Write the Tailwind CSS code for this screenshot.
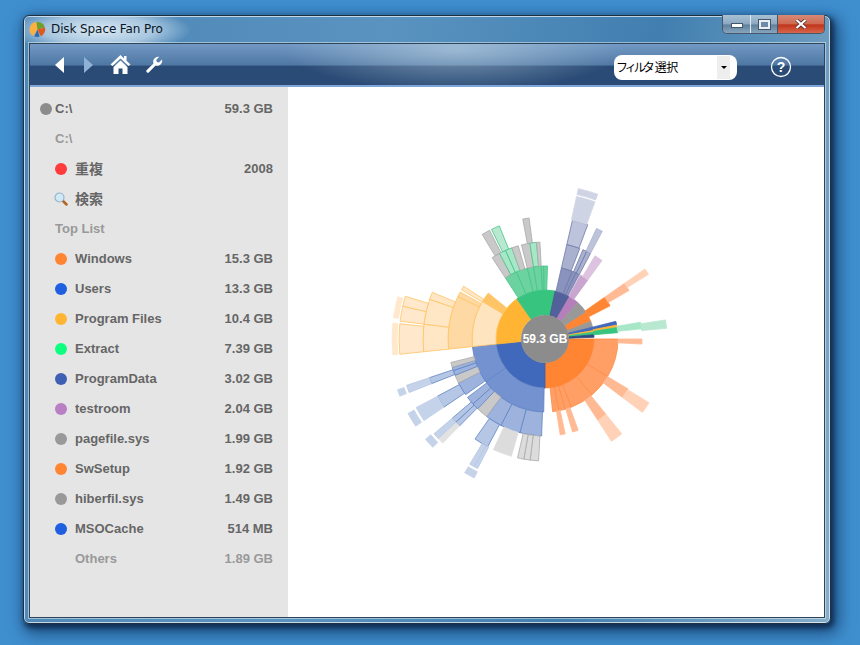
<!DOCTYPE html>
<html lang="en">
<head>
  <meta charset="UTF-8" />
  <title>Disk Space Fan Pro</title>
  <script src="https://cdn.jsdelivr.net/npm/@tailwindcss/browser@4"></script>
</head>
<body class="w-[860px] h-[645px] overflow-hidden bg-[#3f8fcf] pl-[23px] pt-[15px] font-['DejaVu_Sans','Noto_Sans_CJK_JP',sans-serif]">
  <!-- Window -->
  <div class="w-[808px] h-[609px] flex flex-col rounded-[6px] border border-[#1d3044] px-[5px] pb-[5px] shadow-[2px_3px_5px_1px_rgba(10,30,60,0.7),4px_6px_16px_4px_rgba(10,40,80,0.6),inset_0_0_0_1px_rgba(255,255,255,0.65)] bg-[linear-gradient(100deg,#4c86b6_0%,#5a93c0_40%,#417fb0_70%,#85aecb_100%)]">
    <!-- Title bar -->
    <div class="h-[27px] shrink-0 flex items-start justify-between -mx-[5px] pl-[5px] pr-[5px] rounded-t-[6px] bg-[radial-gradient(ellipse_92px_24px_at_75px_14px,rgba(225,238,248,0.95),rgba(225,238,248,0.6)_60%,rgba(225,238,248,0)_100%)]">
      <div class="flex items-center gap-[5px] h-[25px] pt-[1px]">
        <svg class="w-[17px] h-[17px]" viewBox="0 0 16 16">
          <path d="M8 8 L8 1 A7 7 0 0 0 4 14 Z" fill="#fbb040" />
          <path d="M8 8 L7 1 A7 7 0 0 1 15 6 Z" fill="#6f9e2e" />
          <path d="M8 8 L15 6 A7 7 0 0 1 11 14.300 Z" fill="#e2571e" />
          <path d="M8 8 L10 14.700 A7 7 0 0 1 5 14.300 Z" fill="#2b6cb0" />
        </svg>
        <span class="text-[12px] leading-none tracking-[-0.1px] text-[#0c1626]">Disk Space Fan Pro</span>
      </div>
      <!-- Caption buttons -->
      <div class="flex h-[19px] -mt-px rounded-b-[5px] border border-t-0 border-[#46586a] overflow-hidden">
        <div class="w-[28px] flex items-end justify-center pb-[5px] border-r border-[#dfe8ef] bg-[linear-gradient(180deg,#a9c0d3_0%,#8ca9c2_50%,#5f7f9b_55%,#87a5bd_100%)]">
          <div class="w-[12px] h-[5px] bg-white border border-[#44566a]"></div>
        </div>
        <div class="w-[27px] flex items-center justify-center border-r border-[#44566a] bg-[linear-gradient(180deg,#a9c0d3_0%,#8ca9c2_50%,#5f7f9b_55%,#87a5bd_100%)]">
          <div class="w-[11px] h-[9px] border-2 border-[#e8eef3] outline outline-[#44566a] bg-[#6c8ba6]"></div>
        </div>
        <div class="w-[46px] flex items-center justify-center bg-[linear-gradient(180deg,#d58a78_0%,#cf6a52_48%,#c0351c_55%,#d8654a_100%)]">
          <svg class="w-[12px] h-[10px]" viewBox="0 0 12 10">
            <path d="M1.500 1 L10.500 9 M10.500 1 L1.500 9" stroke="#4a2a28" stroke-width="3.600" />
            <path d="M1.500 1 L10.500 9 M10.500 1 L1.500 9" stroke="#fff" stroke-width="2.200" />
          </svg>
        </div>
      </div>
    </div>

    <!-- Client area -->
    <div class="flex-1 flex flex-col min-h-0 border border-[#2d4459] shadow-[0_0_0_1px_rgba(255,255,255,0.45)]">
      <!-- Toolbar -->
      <div class="h-[43px] shrink-0 flex items-center border-b-2 border-[#7fa5d8] bg-[radial-gradient(ellipse_170px_42px_at_425px_5px,rgba(190,212,226,0.6),rgba(190,212,226,0)_100%),linear-gradient(180deg,#7199c4_0%,#4f77a3_52%,#2a4b76_53%,#2a4b76_100%)] pl-[24px] pr-[33px]">
        <svg class="w-[11px] h-[16px]" viewBox="0 0 11 16"><path d="M10 0 V16 L1 8 Z" fill="#fff" /></svg>
        <svg class="w-[11px] h-[16px] ml-[18px]" viewBox="0 0 11 16"><path d="M1 0 V16 L10 8 Z" fill="#8fb1d6" /></svg>
        <svg class="w-[21px] h-[21px] ml-[16px]" viewBox="0 0 21 21">
          <path d="M10.500 1 L0.500 10.500 L2.500 12 L10.500 4.500 L18.500 12 L20.500 10.500 L16.500 6.800 V2 H14 V4.500 Z" fill="#fff" />
          <path d="M10.500 6.500 L3.500 13 V20 H8.500 V14.500 H12.500 V20 H17.500 V13 Z" fill="#fff" />
        </svg>
        <svg class="w-[17px] h-[17px] ml-[15px]" viewBox="0 0 17 17">
          <path d="M16 3.500 L13 6.500 L10.800 6 L10.300 3.800 L13.300 0.800 A5 5 0 0 0 7.500 7.400 L0.800 14 A1.500 1.500 0 0 0 3 16.200 L9.600 9.500 A5 5 0 0 0 16 3.500 Z" fill="#fff" />
        </svg>
        <div class="ml-auto mt-[5px] w-[123px] h-[25px] flex items-center rounded-[8px] bg-white pl-[2px]">
          <span class="text-[12px] leading-none text-black font-['Noto_Sans_CJK_JP',sans-serif]"><span class="tracking-[-3px]">フィルタ</span><span class="ml-[3px] tracking-[-0.5px]">選択</span></span>
          <div class="ml-auto mr-[7px] w-[13px] h-[23px] flex items-center justify-center bg-[#eeeeee]">
            <div class="w-0 h-0 border-x-[3px] border-t-[3px] border-x-transparent border-t-black"></div>
          </div>
        </div>
        <svg class="w-[22px] h-[22px] ml-[33px] mt-[4px] mr-[-1px]" viewBox="0 0 22 22">
          <circle cx="11" cy="11" r="9.500" fill="none" stroke="#fff" stroke-width="1.300" />
          <text x="11" y="16" text-anchor="middle" font-size="14" font-weight="700" fill="#fff" font-family="Liberation Sans">?</text>
        </svg>
      </div>

      <div class="flex-1 flex min-h-0">
        <!-- Sidebar -->
        <aside class="w-[258px] shrink-0 bg-[#e5e5e5] pt-[7px] text-[13px] font-bold text-[#666666] font-['Liberation_Sans','Noto_Sans_CJK_JP',sans-serif]">
          <div class="h-[30px] flex items-center pl-[10px] pr-[15px]">
            <span class="w-[12px] h-[12px] rounded-full bg-[#8c8c8c] mr-[3px]"></span><span>C:\</span><span class="ml-auto">59.3 GB</span>
          </div>
          <div class="h-[30px] flex items-center pl-[25px] pr-[15px] text-[#999999]">C:\</div>
          <div class="h-[30px] flex items-center pl-[25px] pr-[15px]">
            <span class="w-[12px] h-[12px] rounded-full bg-[#ff3b3b] mr-[8px]"></span><span class="text-[14px] leading-none -mt-[1px]">重複</span><span class="ml-auto">2008</span>
          </div>
          <div class="h-[30px] flex items-center pl-[24px] pr-[15px]">
            <svg class="w-[14px] h-[14px] mr-[7px]" viewBox="0 0 14 14">
              <path d="M8.500 8.500 L12.500 12.500" stroke="#b5651d" stroke-width="2.500" stroke-linecap="round" />
              <circle cx="5.500" cy="5.500" r="4.500" fill="#d3e8f5" stroke="#8fb5cf" stroke-width="1.200" />
            </svg>
            <span class="text-[14px] leading-none -mt-[1px]">検索</span>
          </div>
          <div class="h-[30px] flex items-center pl-[25px] text-[#999999]">Top List</div>
          <div class="h-[30px] flex items-center pl-[25px] pr-[15px]"><span class="w-[12px] h-[12px] rounded-full bg-[#ff8533] mr-[8px]"></span><span>Windows</span><span class="ml-auto">15.3 GB</span></div>
          <div class="h-[30px] flex items-center pl-[25px] pr-[15px]"><span class="w-[12px] h-[12px] rounded-full bg-[#1f5fe0] mr-[8px]"></span><span>Users</span><span class="ml-auto">13.3 GB</span></div>
          <div class="h-[30px] flex items-center pl-[25px] pr-[15px]"><span class="w-[12px] h-[12px] rounded-full bg-[#ffb533] mr-[8px]"></span><span>Program Files</span><span class="ml-auto">10.4 GB</span></div>
          <div class="h-[30px] flex items-center pl-[25px] pr-[15px]"><span class="w-[12px] h-[12px] rounded-full bg-[#0dff80] mr-[8px]"></span><span>Extract</span><span class="ml-auto">7.39 GB</span></div>
          <div class="h-[30px] flex items-center pl-[25px] pr-[15px]"><span class="w-[12px] h-[12px] rounded-full bg-[#3f5fb5] mr-[8px]"></span><span>ProgramData</span><span class="ml-auto">3.02 GB</span></div>
          <div class="h-[30px] flex items-center pl-[25px] pr-[15px]"><span class="w-[12px] h-[12px] rounded-full bg-[#b87fc5] mr-[8px]"></span><span>testroom</span><span class="ml-auto">2.04 GB</span></div>
          <div class="h-[30px] flex items-center pl-[25px] pr-[15px]"><span class="w-[12px] h-[12px] rounded-full bg-[#999999] mr-[8px]"></span><span>pagefile.sys</span><span class="ml-auto">1.99 GB</span></div>
          <div class="h-[30px] flex items-center pl-[25px] pr-[15px]"><span class="w-[12px] h-[12px] rounded-full bg-[#ff8533] mr-[8px]"></span><span>SwSetup</span><span class="ml-auto">1.92 GB</span></div>
          <div class="h-[30px] flex items-center pl-[25px] pr-[15px]"><span class="w-[12px] h-[12px] rounded-full bg-[#999999] mr-[8px]"></span><span>hiberfil.sys</span><span class="ml-auto">1.49 GB</span></div>
          <div class="h-[30px] flex items-center pl-[25px] pr-[15px]"><span class="w-[12px] h-[12px] rounded-full bg-[#1f5fe0] mr-[8px]"></span><span>MSOCache</span><span class="ml-auto">514 MB</span></div>
          <div class="h-[30px] flex items-center pl-[45px] pr-[15px] text-[#999999]"><span>Others</span><span class="ml-auto">1.89 GB</span></div>
        </aside>

        <!-- Chart -->
        <main class="flex-1 bg-white">
          <svg id="fan" class="block w-[536px] h-[530px]" viewBox="288 87 536 530"></svg>
        </main>
      </div>
    </div>
  </div>

  <script>
    const CX = 545, CY = 339;

    // [inner, outer, from deg, to deg, fill, stroke] clockwise from 12 o'clock
    const orange = "#ff8533", orange2 = "#ff9f66", orange3 = "#ffba94", orange4 = "#ffd2b8", orangeLine = "#ff8a45";
    const blue = "#4169bb", blue2 = "#7392cf", blue3 = "#9db3dd", blue4 = "#b6c7e6", blue5 = "#c5d3ea", blueLine = "#5f84c4";
    const yellow = "#ffb533", y2 = "#fee4bf", y3 = "#ffd9a3", y4 = "#ffe6c4", y5 = "#ffe8cc", yLine = "#ffc466";
    const green = "#36c47f", green2 = "#6cd3a0", green3 = "#a8e6c8", greenLine = "#45c486";
    const navy = "#53619b", navy2 = "#8a93bd", navy3 = "#aab1cf", navy4 = "#bcc3da", navy5 = "#cfd4e5", navyLine = "#6f7aa8";
    const grey = "#999999", grey3 = "#c9c9c9", grey4 = "#dcdcdc", greyLine = "#aaaaaa";

    const segments = [
      // ring 1
      [24, 49, 90, 180, orange, "#ff7a20"],
      [24, 49, 180, 264, blue, "#3a5fae"],
      [24, 49, 264, 325, yellow, yellow],
      [24, 49, 325, 372, green, green],
      [24, 49, 12, 30, navy, "#465490"],
      [24, 49, 30, 42, "#b57fbb", "#b57fbb"],
      [24, 49, 42, 57, grey, grey],
      [24, 49, 57, 69, orange, orange],
      [24, 49, 69, 76, grey, grey],
      [24, 49, 76, 80, blue, blue],
      [24, 49, 80, 82, yellow, yellow],
      [24, 49, 82, 85, green, green],
      [24, 49, 85, 88, "#2f4a80", "#2f4a80"],
      // ring 2: Windows
      [49, 73, 90, 121, orange2, orangeLine],
      [49, 73, 121, 140, orange2, orangeLine],
      [49, 73, 140, 159, orange2, orangeLine],
      [49, 73, 159, 164, orange2, orangeLine],
      [49, 73, 164, 169, orange2, orangeLine],
      [49, 73, 169, 174, orange2, orangeLine],
      // ring 2: Users
      [49, 73, 181, 234, blue2, blueLine],
      [49, 73, 234, 264, blue2, blueLine],
      // ring 2: Program Files
      [49, 73, 264, 301, y2, yLine],
      [49, 73, 301, 309, "#ffc466", "#ffc466"],
      // ring 2: Extract
      [49, 73, 327, 337, green2, greenLine],
      [49, 73, 337, 346, green2, greenLine],
      [49, 73, 346, 351, green2, greenLine],
      [49, 73, 351, 357, green2, greenLine],
      [49, 73, 357, 359, green2, greenLine],
      [49, 73, 359, 362, green2, greenLine],
      // ring 2: small ones on the right
      [49, 73, 13, 22, navy2, navyLine],
      [49, 73, 22, 25, navy2, navyLine],
      [49, 73, 25, 28, navy2, navyLine],
      [49, 73, 29, 36, "#c9a6d0", "#c9a6d0"],
      [49, 73, 55, 60, orange, orange],
      [49, 73, 60, 63, orange, orange],
      [49, 73, 76, 79, blue, blue],
      [49, 73, 79, 81, yellow, yellow],
      [49, 73, 81, 85, green, green],
      // ring 3: Windows
      [73, 97, 90, 93, orange3, orange3],
      [73, 97, 121, 127, orange3, orange3],
      [73, 97, 141, 147, orange3, orange3],
      [73, 97, 160, 163.5, orange3, orange3],
      [73, 97, 168, 171, orange3, orange3],
      // ring 3: Users
      [73, 97, 182, 195, blue3, blueLine],
      [73, 97, 195, 207, blue3, blueLine],
      [73, 97, 207, 217, blue3, blueLine],
      [73, 97, 217, 224, grey3, greyLine],
      [73, 97, 224, 228, blue3, blueLine],
      [73, 97, 228, 233, blue3, blueLine],
      [73, 97, 235, 243, blue3, blueLine],
      [73, 97, 243, 248, grey3, greyLine],
      [73, 97, 248, 251, blue3, blueLine],
      [73, 97, 251, 253, blue3, blueLine],
      [73, 97, 253, 256, grey3, greyLine],
      // ring 3: Program Files
      [73, 97, 264, 296, y3, yLine],
      [73, 97, 296, 299, y3, yLine],
      [73, 97, 300.500, 303, y4, yLine],
      // ring 3: Extract
      [73, 97, 327, 332, grey3, greyLine],
      [73, 97, 332, 336, green3, greenLine],
      [73, 97, 336, 340, green3, greenLine],
      [73, 97, 340, 344, grey3, greyLine],
      [73, 97, 346, 351, grey3, greyLine],
      [73, 97, 351, 355, green3, greenLine],
      [73, 97, 355, 357, grey3, greyLine],
      // ring 3: right side
      [73, 97, 13, 21, navy3, navyLine],
      [73, 97, 23, 25.5, navy3, navyLine],
      [73, 97, 25.5, 28, navy3, navyLine],
      [73, 97, 31, 36, "#dcc3e0", "#dcc3e0"],
      [73, 97, 55, 60, orange3, orange3],
      [73, 97, 80, 84, green3, green3],
      // ring 4
      [97, 122, 121.500, 127, orange4, orange4],
      [97, 122, 141, 147, orange4, orange4],
      [97, 122, 183, 187, grey4, greyLine],
      [97, 122, 187, 190, grey4, greyLine],
      [97, 122, 190, 193, grey4, greyLine],
      [97, 122, 196, 205, grey4, grey4],
      [97, 122, 208, 215, blue4, blueLine],
      [97, 122, 224.500, 227, blue4, blueLine],
      [97, 122, 227, 229.500, blue4, blueLine],
      [97, 122, 236, 242, blue4, blueLine],
      [97, 122, 248.500, 251.500, blue4, blueLine],
      [97, 122, 264, 277, y4, yLine],
      [97, 122, 277, 289, y4, yLine],
      [97, 122, 289, 292.500, y4, yLine],
      [97, 122, 329, 333, grey3, greyLine],
      [97, 122, 334, 338, "#b8e8d0", greenLine],
      [97, 122, 349.500, 352.500, grey3, greyLine],
      [97, 122, 13, 20.500, navy4, navyLine],
      [97, 122, 25, 28, navy4, navy3],
      [97, 122, 55, 58, orange4, orange4],
      [97, 122, 81, 85, "#b8e8d0", "#b8e8d0"],
      // ring 5
      [122, 146, 207.500, 209, blue5, blue4],
      [122, 146, 209, 211, blue5, blue4],
      [122, 146, 224.500, 227, "#e2e2e2", "#e2e2e2"],
      [122, 146, 227, 229.500, blue5, blue4],
      [122, 146, 236, 242, blue5, blue5],
      [122, 146, 248.500, 251.500, blue5, blue4],
      [122, 146, 264, 276, y5, yLine],
      [122, 146, 277, 283, y5, yLine],
      [122, 146, 283, 287, y5, yLine],
      [122, 146, 12.500, 20, navy5, navy5],
      // ring 6
      [149, 156, 207, 211, blue5, blue5],
      [149, 156, 226, 230, blue5, blue5],
      [149, 156, 236, 241.500, blue5, blue5],
      [149, 156, 248.500, 251, blue5, blue5],
      [148, 153, 264, 276, y5, y5],
      [148, 153, 278, 286, y5, y5],
      [148, 154, 12.500, 20, navy5, navy5],
    ];

    function point(r, deg) {
      const a = (deg - 90) * Math.PI / 180;
      return `${(CX + r * Math.cos(a)).toFixed(2)} ${(CY + r * Math.sin(a)).toFixed(2)}`;
    }

    function arcPath(r0, r1, a0, a1) {
      const large = a1 - a0 > 180 ? 1 : 0;
      return `M${point(r0, a0)} L${point(r1, a0)} A${r1} ${r1} 0 ${large} 1 ${point(r1, a1)} L${point(r0, a1)} A${r0} ${r0} 0 ${large} 0 ${point(r0, a0)} Z`;
    }

    const fan = document.getElementById("fan");
    const NS = "http://www.w3.org/2000/svg";
    segments.forEach(([r0, r1, a0, a1, fill, stroke]) => {
      const p = document.createElementNS(NS, "path");
      p.setAttribute("d", arcPath(r0, r1, a0, a1));
      p.setAttribute("fill", fill);
      p.setAttribute("stroke", stroke);
      p.setAttribute("stroke-width", "0.8");
      fan.appendChild(p);
    });

    const hub = document.createElementNS(NS, "circle");
    hub.setAttribute("cx", CX);
    hub.setAttribute("cy", CY);
    hub.setAttribute("r", 24);
    hub.setAttribute("fill", "#8c8c8c");
    fan.appendChild(hub);

    const label = document.createElementNS(NS, "text");
    label.setAttribute("x", CX);
    label.setAttribute("y", CY + 4);
    label.setAttribute("text-anchor", "middle");
    label.setAttribute("font-size", "12");
    label.setAttribute("font-weight", "700");
    label.setAttribute("font-family", "Liberation Sans");
    label.setAttribute("fill", "#fff");
    label.textContent = "59.3 GB";
    fan.appendChild(label);
  </script>
</body>
</html>
